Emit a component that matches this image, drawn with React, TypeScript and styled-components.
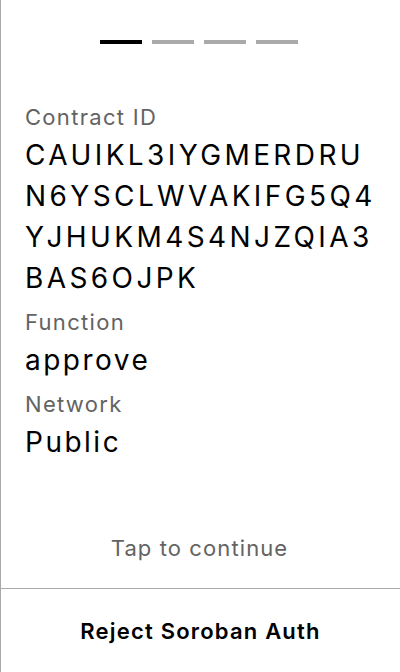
import React from "react";
import styled, { createGlobalStyle } from "styled-components";

const GlobalStyle = createGlobalStyle`
  html, body {
    margin: 0;
    padding: 0;
    background: #ffffff;
  }
  body {
    font-family: Inter, "Noto Sans", "Liberation Sans", sans-serif;
    -webkit-font-smoothing: antialiased;
  }
  * { box-sizing: border-box; }
`;

const Screen = styled.div`
  height: 672px;
  display: flex;
  flex-direction: column;
  border-left: 1px solid #a9a9a9;
  background: #ffffff;
  color: #000000;
`;

const Main = styled.main`
  flex: 1;
  display: flex;
  flex-direction: column;
  padding: 40px 24px 24px;
`;

const Progress = styled.div`
  display: flex;
  justify-content: center;
  gap: 10px;
  margin-right: 3px;
`;

const Step = styled.div<{ $active?: boolean }>`
  width: 42px;
  height: 4px;
  background: ${(p) => (p.$active ? "#000000" : "#aaaaaa")};
`;

const Fields = styled.dl`
  margin: 55px 0 0;
  display: flex;
  flex-direction: column;
  gap: 5px;
`;

const Field = styled.div`
  display: flex;
  flex-direction: column;
`;

const Label = styled.dt`
  font-size: 22px;
  line-height: 36px;
  letter-spacing: 1.3px;
  color: #636363;
  font-weight: 400;
`;

const Value = styled.dd<{ $code?: boolean }>`
  margin: 0;
  font-size: 28px;
  line-height: 41px;
  letter-spacing: ${(p) => (p.$code ? "3.4px" : "2.5px")};
  color: #000000;
  font-weight: 400;
  word-break: break-all;
`;

const Spacer = styled.div`
  flex: 1;
`;

const Hint = styled.div`
  text-align: center;
  font-size: 22px;
  line-height: 32px;
  letter-spacing: 1.1px;
  color: #636363;
  margin-right: 2px;
`;

const Footer = styled.footer`
  height: 84px;
  border-top: 1px solid #a9a9a9;
  display: flex;
  align-items: center;
  justify-content: center;
`;

const RejectButton = styled.button`
  border: none;
  background: transparent;
  padding: 0;
  font-family: inherit;
  font-size: 22px;
  font-weight: 600;
  letter-spacing: 1.2px;
  color: #000000;
  cursor: pointer;
`;

const fields = [
  { label: "Contract ID", value: "CAUIKL3IYGMERDRUN6YSCLWVAKIFG5Q4YJHUKM4S4NJZQIA3BAS6OJPK", code: true },
  { label: "Function", value: "approve", code: false },
  { label: "Network", value: "Public", code: false },
];

export default function App() {
  return (
    <>
      <GlobalStyle />
      <Screen>
        <Main>
          <Progress>
            <Step $active />
            <Step />
            <Step />
            <Step />
          </Progress>
          <Fields>
            {fields.map((f) => (
              <Field key={f.label}>
                <Label>{f.label}</Label>
                <Value $code={f.code}>{f.value}</Value>
              </Field>
            ))}
          </Fields>
          <Spacer />
          <Hint>Tap to continue</Hint>
        </Main>
        <Footer>
          <RejectButton>Reject Soroban Auth</RejectButton>
        </Footer>
      </Screen>
    </>
  );
}
